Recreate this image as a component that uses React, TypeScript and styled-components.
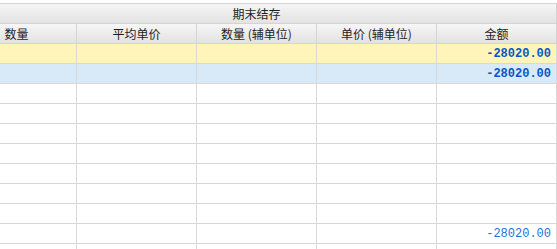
import React from "react";
import styled, { createGlobalStyle } from "styled-components";

const Global = createGlobalStyle`
  html, body { margin: 0; padding: 0; background: #ffffff; }
  body { font-family: "Noto Sans CJK SC", "Liberation Sans", sans-serif; font-size: 12px; color: #1e1e1e; }
`;

const Viewport = styled.div`
  width: 557px;
  height: 249px;
  overflow: hidden;
  padding-top: 3px;
  box-sizing: border-box;
  background: #fff;
`;

const Grid = styled.div`
  margin-left: -43px;
  width: 600px;
  border-top: 1px solid #d4d4d4;
  display: grid;
  grid-template-columns: repeat(5, 120px);
  grid-auto-rows: 20px;
`;

const GroupHeader = styled.div`
  grid-column: 1 / -1;
  display: flex;
  align-items: center;
  justify-content: center;
  background: linear-gradient(#f5f5f5, #e3e3e3);
  border-bottom: 1px solid #d4d4d4;
  border-right: 1px solid #d4d4d4;
  line-height: 1;
`;

const HeadCell = styled.div`
  display: flex;
  align-items: center;
  justify-content: center;
  background: linear-gradient(#f6f6f6, #e2e2e2);
  border-right: 1px solid #d4d4d4;
  border-bottom: 1px solid #d4d4d4;
  line-height: 1;
  white-space: pre;
`;

type Tone = "yellow" | "blue" | "plain";

const bg: Record<Tone, string> = {
  yellow: "#fff5b8",
  blue: "#d8eaf8",
  plain: "#ffffff",
};

const Cell = styled.div<{ $tone: Tone; $strong?: boolean }>`
  background: ${(p) => bg[p.$tone]};
  border-right: 1px solid #d8d8d8;
  border-bottom: 1px solid #d8d8d8;
  display: flex;
  align-items: center;
  justify-content: flex-end;
  padding-right: 5px;
  font-family: "Liberation Mono", "DejaVu Sans Mono", monospace;
  font-size: 12px;
  font-weight: ${(p) => (p.$strong ? 700 : 400)};
  color: ${(p) => (p.$strong ? "#0a55c8" : "#1f6fd6")};
  line-height: 1;
`;

const headers = ["数量", "平均单价", "数量 (辅单位)", "单价 (辅单位)", "金额"];

const rows: { tone: Tone; amount?: string; strong?: boolean }[] = [
  { tone: "yellow", amount: "-28020.00", strong: true },
  { tone: "blue", amount: "-28020.00", strong: true },
  { tone: "plain" },
  { tone: "plain" },
  { tone: "plain" },
  { tone: "plain" },
  { tone: "plain" },
  { tone: "plain" },
  { tone: "plain" },
  { tone: "plain", amount: "-28020.00" },
  { tone: "plain" },
];

export default function App() {
  return (
    <>
      <Global />
      <Viewport>
        <Grid>
          <GroupHeader>期末结存</GroupHeader>
          {headers.map((h) => (
            <HeadCell key={h}>{h}</HeadCell>
          ))}
          {rows.map((r, i) =>
            [0, 1, 2, 3, 4].map((c) => (
              <Cell key={`${i}-${c}`} $tone={r.tone} $strong={r.strong}>
                {c === 4 ? r.amount ?? "" : ""}
              </Cell>
            ))
          )}
        </Grid>
      </Viewport>
    </>
  );
}
